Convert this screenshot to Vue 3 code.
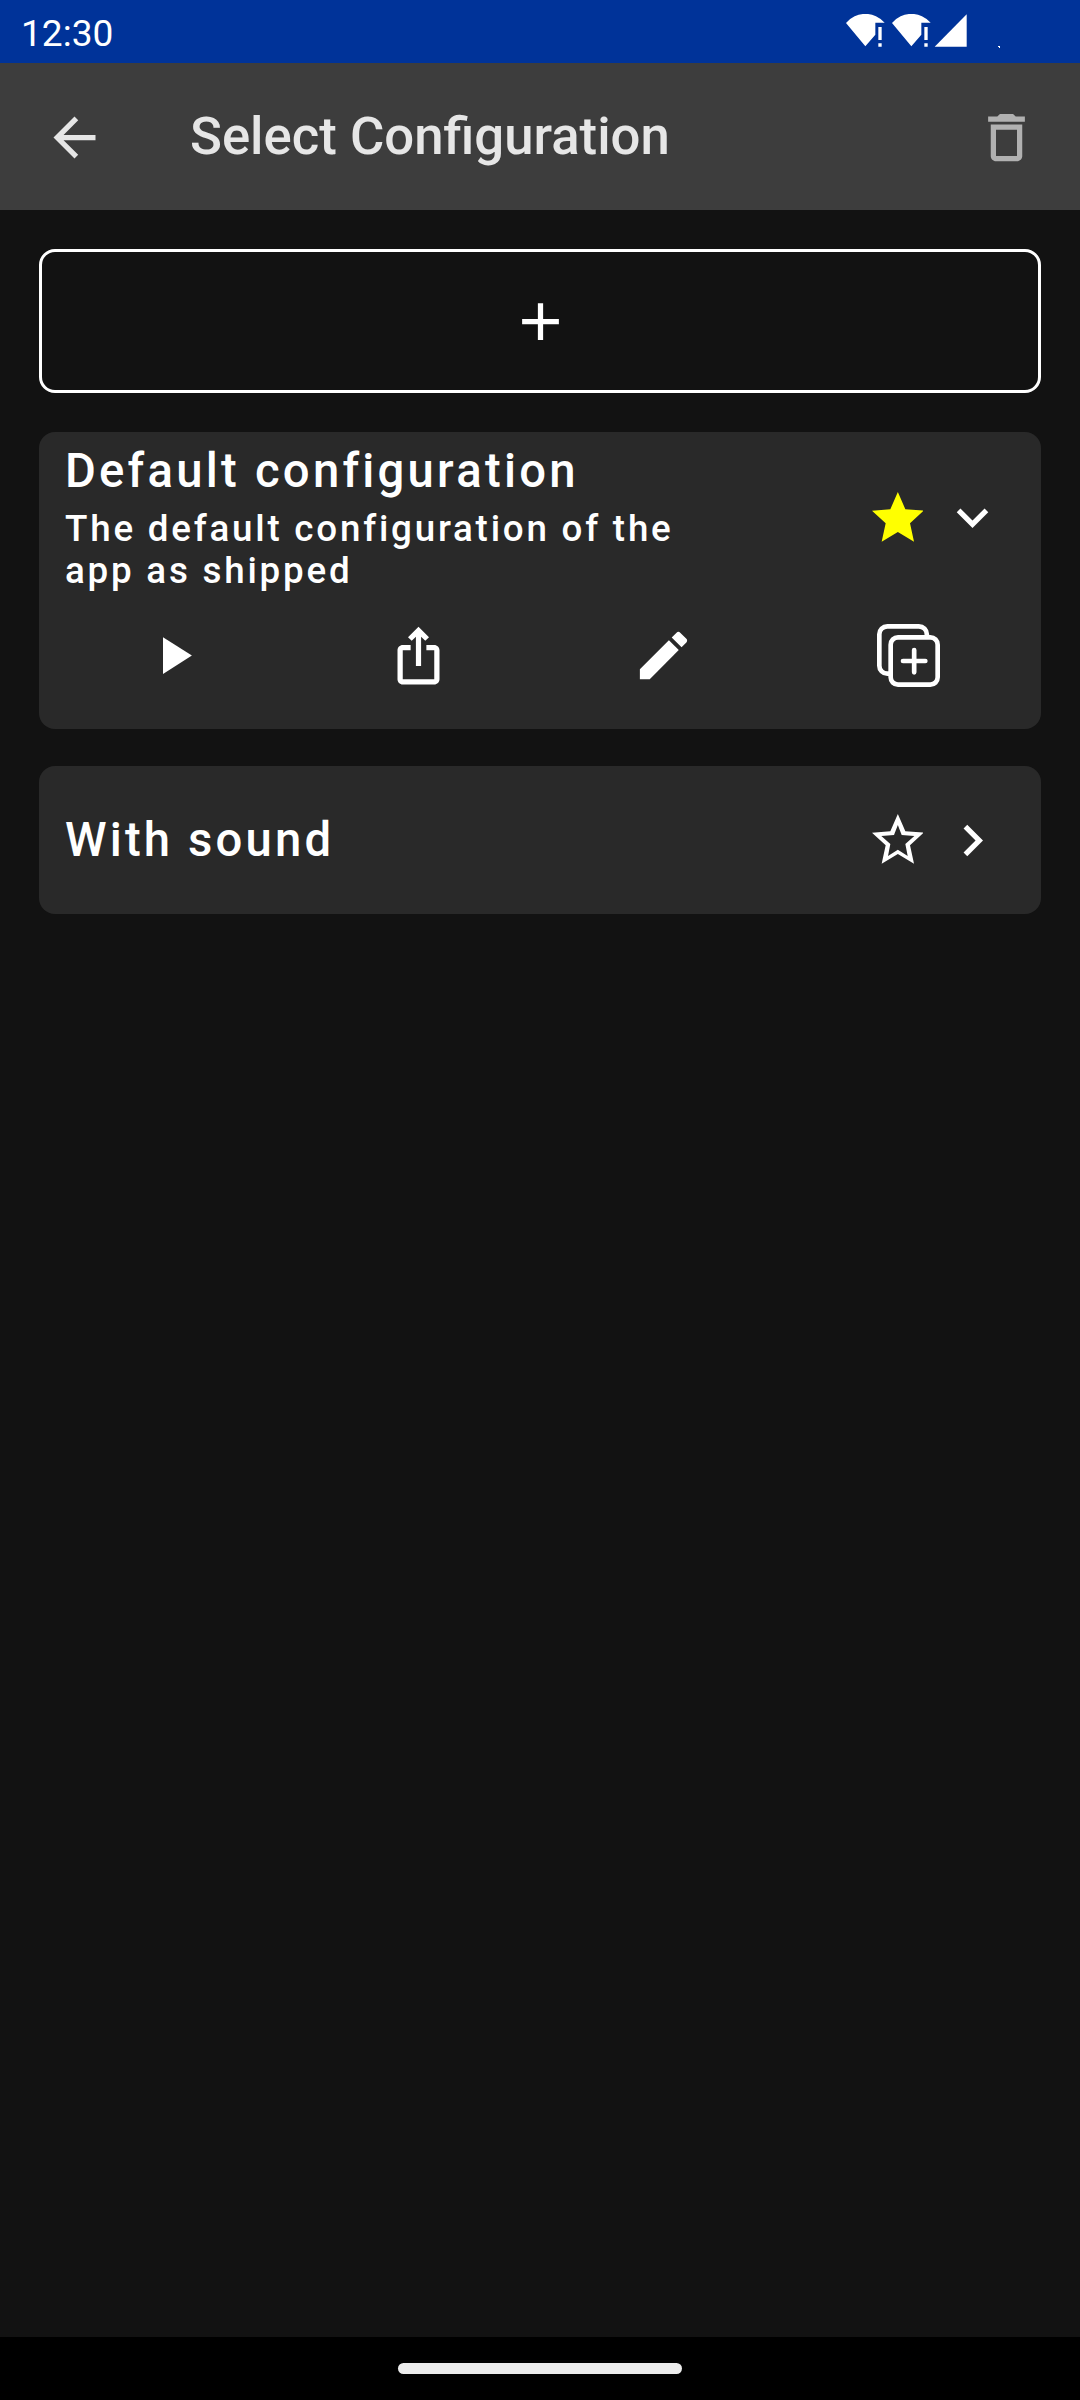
<script setup>
const actions = [
  { name: 'Play', paths: ['M8 5v14l11-7z'] },
  {
    name: 'Share',
    paths: [
      'M16 5l-1.42 1.42-1.59-1.59V16h-1.98V4.83L9.42 6.42 8 5l4-4 4 4zm4 5v11c0 1.1-.9 2-2 2H6c-1.11 0-2-.9-2-2V10c0-1.11.89-2 2-2h3v2H6v11h12V10h-3V8h3c1.1 0 2 .89 2 2z',
    ],
  },
  {
    name: 'Edit',
    paths: [
      'M3 17.25V21h3.75L17.81 9.94l-3.75-3.75L3 17.25z',
      'M20.71 7.04c.39-.39.39-1.02 0-1.41l-2.34-2.34c-.39-.39-1.02-.39-1.41 0l-1.83 1.83 3.75 3.75 1.83-1.83z',
    ],
  },
]
</script>

<template>
  <div class="screen">
    <div class="status-bar">
      <span class="clock">12:30</span>
      <svg class="status-icons" viewBox="0 0 462 102" aria-hidden="true">
        <g id="wifi">
          <path d="M0 27A76 76 0 0 1 116 26H88V62L58 97z" />
          <path d="M97 39h10v39h-10zM97 88h10v10.500h-10z" />
        </g>
        <use href="#wifi" x="138" />
        <path d="M266 98L362 1V98z" />
        <path d="M456 96h6v6h-3v-3h-3z" />
      </svg>
    </div>

    <header class="app-bar">
      <button class="back" aria-label="Back">
        <svg class="icon" viewBox="0 0 24 24">
          <path d="M20 11H7.83l5.59-5.59L12 4l-8 8 8 8 1.41-1.41L7.83 13H20v-2z" />
        </svg>
      </button>
      <h1>Select Configuration</h1>
      <button class="delete" aria-label="Delete">
        <svg class="icon" viewBox="0 0 24 24">
          <path
            fill-rule="evenodd"
            d="M6 19c0 1.1.9 2 2 2h8c1.1 0 2-.9 2-2V7H6v12zM8 9h8v10H8V9zm7.500-5l-1-1h-5l-1 1H5v2h14V4h-3.500z"
          />
        </svg>
      </button>
    </header>

    <main>
      <button class="add" aria-label="Add configuration">
        <svg class="icon" viewBox="0 0 24 24"><path d="M19 13h-6v6h-2v-6H5v-2h6V5h2v6h6v2z" /></svg>
      </button>

      <section class="card expanded">
        <div class="head">
          <div class="labels">
            <h2>Default configuration</h2>
            <p>The default configuration of the app as shipped</p>
          </div>
          <svg class="star favourite" viewBox="0 0 155 149">
            <path d="M77.500 0L100 52L155 56L114 94L126 149L77.500 120L29 149L41 94L0 56L55 52z" />
          </svg>
          <svg class="icon chevron" viewBox="0 0 24 24">
            <path d="M16.590 8.590L12 13.170 7.410 8.590 6 10l6 6 6-6z" />
          </svg>
        </div>
        <div class="actions">
          <button v-for="action in actions" :key="action.name" :aria-label="action.name">
            <svg class="icon" viewBox="0 0 24 24">
              <path v-for="d in action.paths" :key="d" :d="d" />
            </svg>
          </button>
          <button aria-label="Duplicate">
            <svg class="icon duplicate" viewBox="0 0 189 189">
              <path d="M149.500 36V31a24 24 0 0 0-24-24H31A24 24 0 0 0 7 31V125a24 24 0 0 0 24 24h6" />
              <rect x="41" y="40" width="141" height="142" rx="22" />
              <path class="plus" d="M78 111h67M111.500 78v67" />
            </svg>
          </button>
        </div>
      </section>

      <section class="card collapsed">
        <div class="head">
          <div class="labels"><h2>With sound</h2></div>
          <svg class="star" viewBox="0 0 155 149">
            <path
              fill-rule="evenodd"
              d="M77.500 0L100 52L155 56L114 94L126 149L77.500 120L29 149L41 94L0 56L55 52zM77.500 33L66 63L28 66L55 90L48 126L77.500 107L107 126L100 90L127 66L89 63z"
            />
          </svg>
          <svg class="icon chevron" viewBox="0 0 24 24">
            <path d="M10 6L8.590 7.410 13.170 12l-4.580 4.590L10 18l6-6z" />
          </svg>
        </div>
      </section>
    </main>

    <footer class="nav-bar"><div class="pill"></div></footer>
  </div>
</template>

<style>
body {
  background: #121212;
}
</style>

<style scoped>
.screen {
  width: 1080px;
  height: 2400px;
  display: flex;
  flex-direction: column;
  background: #121212;
  color: #fff;
  font-family: Roboto, sans-serif;
}

h1,
h2,
p {
  margin: 0;
  font-weight: 500;
}

button {
  margin: 0;
  padding: 0;
  border: 0;
  background: none;
  color: inherit;
  display: flex;
  align-items: center;
  justify-content: center;
}

svg {
  display: block;
  flex: none;
  fill: currentColor;
}

.icon {
  width: 63px;
  height: 63px;
}

.status-bar {
  height: 63px;
  box-sizing: border-box;
  padding: 0 80px 0 21px;
  display: flex;
  justify-content: space-between;
  background: #003399;
}

.clock {
  font-size: 37.100px;
  line-height: 44px;
  padding-top: 12px;
}

.status-icons {
  width: 154px;
  height: 34px;
  margin-top: 14px;
}

.app-bar {
  height: 147px;
  box-sizing: border-box;
  padding: 2px 42px 0 43px;
  display: flex;
  align-items: center;
  background: #3d3d3d;
  color: #e6e6e6;
}

h1 {
  flex: 1;
  margin-left: 84px;
  font-size: 52.700px;
  line-height: 62px;
  padding-bottom: 3px;
}

.delete {
  color: #b1b1b1;
}

main {
  flex: 1;
  padding: 39px 39px 0;
}

.add {
  width: 1002px;
  height: 144px;
  box-sizing: border-box;
  border: 3px solid #fff;
  border-radius: 16px;
}

.card {
  margin-top: 39px;
  border-radius: 16px;
  background: #292929;
}

.expanded {
  height: 297px;
}

.collapsed {
  height: 148px;
  margin-top: 37px;
  display: flex;
  align-items: center;
}

.head {
  display: flex;
  align-items: center;
  width: 100%;
  box-sizing: border-box;
  padding: 0 37px 0 26px;
}

.expanded .head {
  height: 171px;
}

.labels {
  flex: 1;
  max-width: 640px;
  margin-right: auto;
}

h2 {
  font-size: 47.250px;
  line-height: 56px;
  letter-spacing: 3.230px;
}

.collapsed h2 {
  letter-spacing: 3.150px;
}

p {
  width: 640px;
  margin-top: 9px;
  font-size: 36.750px;
  line-height: 42px;
  letter-spacing: 2.780px;
}

.star {
  width: 51.700px;
  height: 49.700px;
  margin: 0 17.600px 1.500px 0;
}

.favourite {
  color: #ffff00;
}

.actions {
  display: flex;
  padding: 21px 10px 0 12px;
}

.actions button {
  width: 245px;
}

.duplicate {
  fill: none;
  stroke: currentColor;
  stroke-width: 14;
}

.plus {
  stroke-linecap: round;
}

.nav-bar {
  height: 63px;
  display: flex;
  justify-content: center;
  background: #000;
}

.pill {
  width: 284px;
  height: 11px;
  margin-top: 26px;
  border-radius: 5.500px;
  background: #ececec;
}
</style>
